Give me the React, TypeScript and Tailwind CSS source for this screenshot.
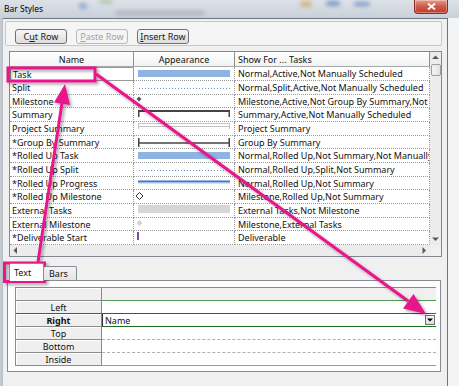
import React from "react";

type Look =
  | "bar"
  | "dots"
  | "diamond"
  | "summary"
  | "project"
  | "group"
  | "progress"
  | "hollow"
  | "ext"
  | "extDiamond"
  | "tick";

const ROWS: { name: string; look: Look; show: string; h: string }[] = [
  { name: "Task", look: "bar", show: "Normal,Active,Not Manually Scheduled", h: "h-[14px]" },
  { name: "Split", look: "dots", show: "Normal,Split,Active,Not Manually Scheduled", h: "h-[14px]" },
  { name: "Milestone", look: "diamond", show: "Milestone,Active,Not Group By Summary,Not Manually Scheduled", h: "h-[13px]" },
  { name: "Summary", look: "summary", show: "Summary,Active,Not Manually Scheduled", h: "h-[14px]" },
  { name: "Project Summary", look: "project", show: "Project Summary", h: "h-[14px]" },
  { name: "*Group By Summary", look: "group", show: "Group By Summary", h: "h-[13px]" },
  { name: "*Rolled Up Task", look: "bar", show: "Normal,Rolled Up,Not Summary,Not Manually Scheduled", h: "h-[14px]" },
  { name: "*Rolled Up Split", look: "dots", show: "Normal,Rolled Up,Split,Not Summary", h: "h-[14px]" },
  { name: "*Rolled Up Progress", look: "progress", show: "Normal,Rolled Up,Not Summary", h: "h-[13px]" },
  { name: "*Rolled Up Milestone", look: "hollow", show: "Milestone,Rolled Up,Not Summary", h: "h-[14px]" },
  { name: "External Tasks", look: "ext", show: "External Tasks,Not Milestone", h: "h-[14px]" },
  { name: "External Milestone", look: "extDiamond", show: "Milestone,External Tasks", h: "h-[13px]" },
  { name: "*Deliverable Start", look: "tick", show: "Deliverable", h: "h-[14px]" },
];

const LABELS = ["Left", "Right", "Top", "Bottom", "Inside"];

// bar drawing inside the Appearance column
function Appearance({ kind }: { kind: Look }) {
  return (
    <svg width="100" height="13" className="block overflow-visible">
      {kind === "bar" && <rect x="4" y="3" width="92" height="7" fill="#8eb4e3" />}
      {kind === "dots" && (
        <line x1="5" y1="7.5" x2="96" y2="7.5" stroke="#6a95d8" strokeWidth="1" strokeDasharray="1 2" />
      )}
      {kind === "diamond" && <polygon points="5,1.5 7.5,4 5,6.5 2.5,4" fill="#555" />}
      {kind === "summary" && (
        <g fill="#454545">
          <rect x="4" y="2" width="92" height="2" />
          <rect x="4" y="2" width="1.5" height="7" />
          <rect x="94.5" y="2" width="1.5" height="7" />
        </g>
      )}
      {kind === "project" && (
        <g fill="none" stroke="#c4c4c4">
          <rect x="4.5" y="1.5" width="91" height="3" />
          <line x1="4.5" y1="1" x2="4.5" y2="7" />
          <line x1="95.5" y1="1" x2="95.5" y2="7" />
        </g>
      )}
      {kind === "group" && (
        <g stroke="#454545">
          <line x1="4" y1="7" x2="96" y2="7" strokeWidth="1.5" />
          <line x1="4.75" y1="2" x2="4.75" y2="11" strokeWidth="1.5" />
          <line x1="95.25" y1="2" x2="95.25" y2="11" strokeWidth="1.5" />
        </g>
      )}
      {kind === "progress" && (
        <g>
          <rect x="4" y="3.5" width="92" height="2" fill="#3b74c9" />
          <rect x="4" y="5.5" width="92" height="1" fill="#a9c3ea" />
        </g>
      )}
      {kind === "hollow" && (
        <polygon points="5.5,2.5 9,6 5.5,9.5 2,6" fill="#fff" stroke="#333" strokeWidth="1" />
      )}
      {kind === "ext" && <rect x="4" y="1" width="92" height="8" fill="#d6d6d6" />}
      {kind === "extDiamond" && <polygon points="5.5,2 8.5,5 5.5,8 2.5,5" fill="#d2d2d2" />}
      {kind === "tick" && <rect x="3" y="1" width="2" height="8" fill="#7b4aa6" />}
    </svg>
  );
}

function Arrow({ dir }: { dir: "up" | "down" | "left" | "right" }) {
  const pts = {
    up: "0,4 3.5,0.5 7,4",
    down: "0,0.5 3.5,4 7,0.5",
    left: "4,0 0.5,3.5 4,7",
    right: "0.5,0 4,3.5 0.5,7",
  }[dir];
  const vertical = dir === "up" || dir === "down";
  return (
    <svg width={vertical ? 7 : 5} height={vertical ? 5 : 7}>
      <polygon points={pts} fill="#5a5a5a" />
    </svg>
  );
}

function Btn({ label, hot, disabled }: { label: string; hot: number; disabled?: boolean }) {
  return (
    <div
      className={`flex h-[15px] w-[52px] items-center justify-center rounded-[3px] border text-[9px] leading-none ${
        disabled
          ? "border-[#b5b9bc] bg-[#f4f4f4] text-[#a3a3a3]"
          : "border-[#707070] bg-gradient-to-b from-[#f7f7f7] to-[#dddddd] text-[#1a1a1a]"
      }`}
    >
      <span>
        {label.slice(0, hot)}
        <span className="underline underline-offset-1">{label[hot]}</span>
        {label.slice(hot + 1)}
      </span>
    </div>
  );
}

export default function App() {
  const pink = "#e8178a";
  return (
    <div className="relative h-[386px] w-[459px] overflow-hidden bg-[#f3f4f6] font-['Noto_Sans',sans-serif] text-[#111]">
      {/* glass title bar */}
      <div className="flex h-[18px] items-start bg-gradient-to-b from-[#dde2e8] to-[#c8d0d9]">
        <span className="ml-[4px] mt-[3px] text-[8.5px] leading-[11px] text-black">Bar Styles</span>
        <span className="ml-[36px] mt-[3px] h-[6px] w-[8px] rounded-full bg-[#5d86c0] opacity-60 blur-[2px]" />
        <span className="ml-[12px] mt-[0px] h-[3px] w-[14px] rounded-full bg-[#7aa860] opacity-60 blur-[2px]" />
        <span className="ml-[2px] mt-[11px] h-[4px] w-[90px] rounded-full bg-[#8a9099] opacity-50 blur-[2px]" />
        <span className="ml-[95px] mt-[1px] h-[6px] w-[12px] rounded-full bg-[#d49a4a] opacity-60 blur-[2px]" />
        <span className="ml-[14px] mt-[1px] h-[5px] w-[14px] rounded-full bg-[#4f7fb8] opacity-70 blur-[2px]" />
        <span className="ml-[14px] mt-[2px] h-[4px] w-[16px] rounded-full bg-[#4f7fb8] opacity-70 blur-[2px]" />
        <div className="ml-auto mr-[11px] flex h-[14px] w-[34px] items-center justify-center rounded-b-[4px] border border-t-0 border-[#8a2a22] bg-gradient-to-b from-[#e49a8e] via-[#cf5a48] to-[#c0392b] shadow-[inset_0_0_0_1px_rgba(255,255,255,0.35)]">
          <svg width="9" height="7">
            <path d="M1 0.5 L8 6.5 M8 0.5 L1 6.5" stroke="#fff" strokeWidth="1.8" />
          </svg>
        </div>
      </div>

      <div className="flex">
        {/* left frame */}
        <div className="h-[368px] w-[3px] bg-gradient-to-r from-[#c9ced4] to-[#b7bec6]" />
        <div className="flex h-[368px] w-[445px] flex-col border-r border-t border-[#6e757c] bg-[#f0f0f0]">
          {/* toolbar */}
          <div className="ml-[2px] mt-[2px] flex h-[25px] w-[437px] gap-[9px] rounded-[2px] border border-[#c6c9cc] bg-[#f5f5f5] pl-[9px] pt-[7px]">
            <Btn label="Cut Row" hot={1} />
            <Btn label="Paste Row" hot={0} disabled />
            <Btn label="Insert Row" hot={0} />
          </div>

          {/* bar styles grid */}
          <div className="ml-[6px] mt-[5px] flex h-[206px] w-[433px] flex-col border border-[#828790] bg-white text-[9px] leading-none">
            <div className="flex h-[193px]">
              <div className="flex w-[420px] flex-col">
                <div className="flex h-[15px] border-b border-[#a9a9a9] bg-gradient-to-b from-white to-[#f1f2f4]">
                  <div className="flex w-[124px] items-center justify-center border-r border-[#8e8e8e]">Name</div>
                  <div className="flex w-[101px] items-center justify-center border-r border-[#8e8e8e]">Appearance</div>
                  <div className="flex w-[195px] items-center border-r border-[#8e8e8e] pl-[3px]">Show For ... Tasks</div>
                </div>
                {ROWS.map((r, i) => (
                  <div key={r.name} className={`flex ${r.h}`}>
                    <div
                      className={`flex w-[124px] items-center border-dotted border-[#9a9a9a] pl-[2px] ${
                        i === 0 ? "border border-solid border-[#3f7f3f]" : "border-b border-r"
                      }`}
                    >
                      {r.name}
                    </div>
                    <div className="w-[101px] border-b border-r border-dotted border-[#9a9a9a]">
                      <Appearance kind={r.look} />
                    </div>
                    <div className="flex w-[195px] items-center overflow-hidden whitespace-nowrap border-b border-r border-dotted border-[#9a9a9a] pl-[3px]">
                      {r.show}
                    </div>
                  </div>
                ))}
              </div>
              {/* vertical scrollbar */}
              <div className="flex w-[11px] flex-col bg-[#ececec]">
                <div className="flex h-[11px] items-center justify-center">
                  <Arrow dir="up" />
                </div>
                <div className="ml-[1px] mt-[1px] h-[12px] w-[10px] rounded-[2px] border border-[#9ba0a6] bg-gradient-to-r from-[#f4f4f4] to-[#e2e2e2]" />
                <div className="mt-auto flex h-[11px] items-center justify-center">
                  <Arrow dir="down" />
                </div>
              </div>
            </div>
            {/* horizontal scrollbar */}
            <div className="flex h-[11px] bg-[#ececec]">
              <div className="flex w-[11px] items-center justify-center">
                <Arrow dir="left" />
              </div>
              <div className="flex-1" />
              <div className="flex w-[11px] items-center justify-center">
                <Arrow dir="right" />
              </div>
              <div className="w-[11px] bg-[#f0f0f0]" />
            </div>
          </div>

          {/* tabs */}
          <div className="z-10 ml-[6px] mt-[6px] flex h-[17px] items-end text-[9px] leading-none">
            <div className="-mb-px flex h-[18px] w-[35px] items-center rounded-t-[2px] border border-b-0 border-[#898c95] bg-white pl-[4px]">
              Text
            </div>
            <div className="flex h-[14px] w-[33px] items-center rounded-t-[2px] border border-l-0 border-b-0 border-[#898c95] bg-gradient-to-b from-[#f4f4f4] to-[#e3e3e3] pl-[5px]">
              Bars
            </div>
          </div>

          {/* tab panel */}
          <div className="ml-[4px] h-[92px] w-[434px] border border-[#898c95] bg-[#fdfdfd] pl-[7px] pt-[6px] text-[9px] leading-none">
            <div className="flex w-[421px] flex-col border-l border-t border-[#8a8a8a]">
              <div className="flex h-[13px]">
                <div className="w-[86px] border-b border-r border-[#8a8a8a] bg-[#efefef] shadow-[inset_1px_1px_0_#fff]" />
                <div className="flex-1 border-b border-[#4f9a4f] bg-[#f0f0f0]" />
              </div>
              {LABELS.map((l) => {
                const right = l === "Right";
                const left = l === "Left";
                const dashed = l === "Top" || l === "Bottom";
                return (
                  <div key={l} className="flex h-[13px]">
                    <div
                      className={`flex w-[86px] items-center justify-center border-b border-r border-[#8a8a8a] bg-[#efefef] shadow-[inset_1px_1px_0_#fff] ${
                        right ? "font-bold" : ""
                      } ${left ? "border-b-[#555]" : ""}`}
                    >
                      {l}
                    </div>
                    <div
                      className={`flex flex-1 items-center bg-white pl-[2px] ${
                        right
                          ? "border-b border-l border-[#1f6e1f] border-l-[#333]"
                          : left
                            ? "border-b border-[#1f6e1f]"
                            : dashed
                              ? "border-b border-dashed border-[#b0b0b0]"
                              : "border-b border-[#9a9a9a]"
                      }`}
                    >
                      {right && (
                        <>
                          <span>Name</span>
                          <div className="ml-auto mr-[1px] flex h-[10px] w-[10px] items-center justify-center border border-[#707070] bg-gradient-to-b from-[#f8f8f8] to-[#dcdcdc]">
                            <svg width="6" height="4">
                              <polygon points="0,0.5 6,0.5 3,3.5" fill="#000" />
                            </svg>
                          </div>
                        </>
                      )}
                    </div>
                  </div>
                );
              })}
            </div>
          </div>
        </div>
      </div>

      {/* pink callouts drawn over the dialog */}
      <svg className="pointer-events-none absolute left-0 top-0" width="459" height="386">
        <defs>
          <filter id="sh" x="-20%" y="-20%" width="140%" height="140%">
            <feDropShadow dx="2" dy="2" stdDeviation="1.5" floodColor="#000" floodOpacity="0.35" />
          </filter>
        </defs>
        <g filter="url(#sh)" fill={pink} stroke={pink}>
          <rect x="8" y="68" width="87" height="13" fill="none" strokeWidth="3" />
          <rect x="4.5" y="263" width="40" height="18.5" fill="none" strokeWidth="3" />
          <line x1="38" y1="262" x2="62" y2="103" strokeWidth="3" />
          <polygon points="65,84 70,105 54,102.5" stroke="none" />
          <line x1="96" y1="74" x2="408" y2="301" strokeWidth="3" />
          <polygon points="426,314 403,308.5 413.5,294" stroke="none" />
        </g>
      </svg>
    </div>
  );
}
